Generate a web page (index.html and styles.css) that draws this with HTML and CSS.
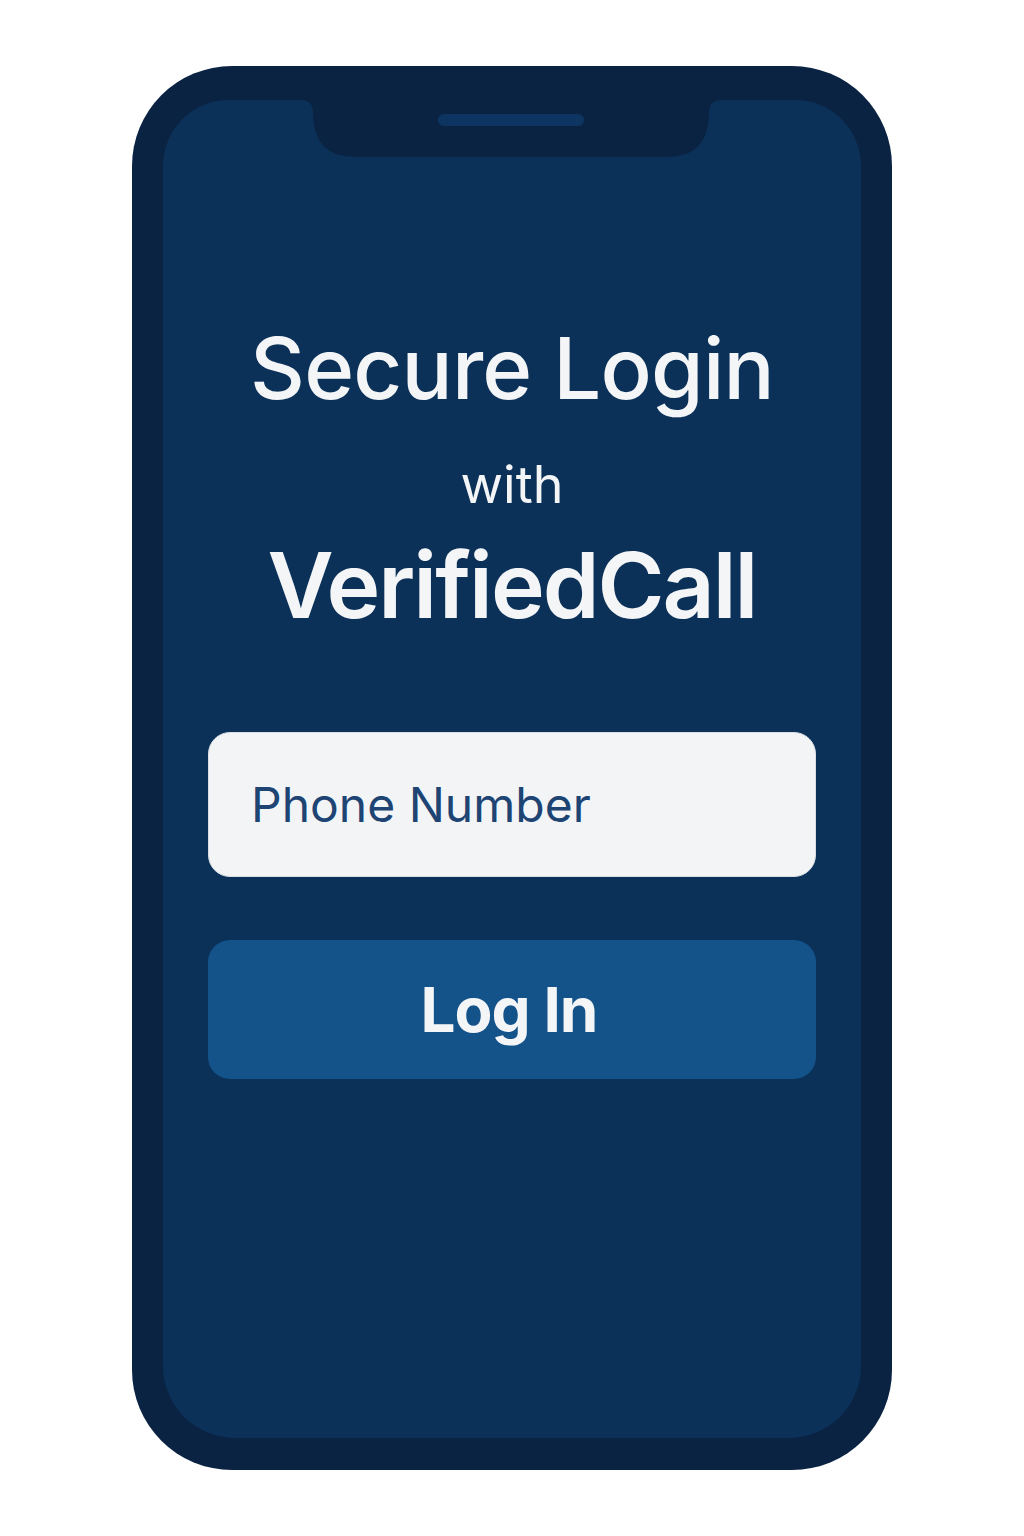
FILE: index.html
```html
<!DOCTYPE html>
<html lang="en">
<head>
<meta charset="utf-8">
<title>Secure Login with VerifiedCall</title>
<link rel="stylesheet" href="styles.css">
</head>
<body>
  <div class="phone">
    <div class="screen">
      <div class="notch">
        <svg class="notch-shape" width="422" height="57" viewBox="0 0 422 57" aria-hidden="true">
          <path d="M0 0 Q13 0 13 13 L13 16 Q15 57 54 57 L368 57 Q407 57 409 16 L409 13 Q409 0 422 0 Z" fill="#0a2342"/>
        </svg>
        <span class="speaker"></span>
      </div>
      <div class="content">
        <h1 class="title">Secure Login</h1>
        <p class="with">with</p>
        <h2 class="brand">VerifiedCall</h2>
        <form class="login-form">
          <input class="phone-input" type="tel" placeholder="Phone Number">
          <button class="login-btn" type="button">Log In</button>
        </form>
      </div>
    </div>
  </div>
</body>
</html>
```

FILE: styles.css
```css
html, body {
  margin: 0;
  padding: 0;
  background: #ffffff;
}

body {
  padding: 66px 0 0 132px;
  font-family: Inter, "Noto Sans", "Liberation Sans", sans-serif;
}

.phone {
  width: 760px;
  height: 1404px;
  box-sizing: border-box;
  padding: 34px 31px 32px 31px;
  background: #0a2342;
  border-radius: 100px;
}

.screen {
  position: relative;
  width: 698px;
  height: 1338px;
  background: #0c3159;
  border-radius: 66px 66px 72px 72px;
  overflow: hidden;
}

.notch {
  position: absolute;
  top: 0;
  left: 137px;
  width: 422px;
  height: 57px;
}

.notch-shape {
  display: block;
}

.speaker {
  position: absolute;
  top: 14px;
  left: 138px;
  width: 146px;
  height: 12px;
  border-radius: 6px;
  background: #0e3561;
}

.content {
  display: flex;
  flex-direction: column;
  align-items: center;
  padding: 219px 45px 0 45px;
}

.title {
  margin: 0;
  font-size: 85px;
  line-height: 100px;
  font-weight: 500;
  color: #f3f5f7;
  letter-spacing: -0.8px;
}

.with {
  margin: 36px 0 0 0;
  font-size: 52px;
  line-height: 60px;
  font-weight: 400;
  color: #f3f5f7;
}

.brand {
  margin: 20px 0 0 0;
  font-size: 91px;
  line-height: 100px;
  font-weight: 600;
  color: #f3f5f7;
  letter-spacing: -2px;
}

.login-form {
  align-self: stretch;
  display: flex;
  flex-direction: column;
  gap: 63px;
  margin-top: 97px;
}

.phone-input {
  box-sizing: border-box;
  width: 100%;
  height: 145px;
  padding: 0 0 0 42px;
  border: 1px solid #d9dee4;
  border-radius: 22px;
  background: #f2f4f6;
  font-family: inherit;
  font-size: 48px;
  color: #1d4473;
  outline: none;
}

.phone-input::placeholder {
  color: #1d4473;
  opacity: 1;
}

.login-btn {
  box-sizing: border-box;
  width: 100%;
  height: 139px;
  padding: 0 6px 0 0;
  border: none;
  border-radius: 22px;
  background: #14528a;
  font-family: inherit;
  font-size: 62px;
  font-weight: 700;
  color: #f3f5f7;
  letter-spacing: -1px;
  cursor: pointer;
}
```
